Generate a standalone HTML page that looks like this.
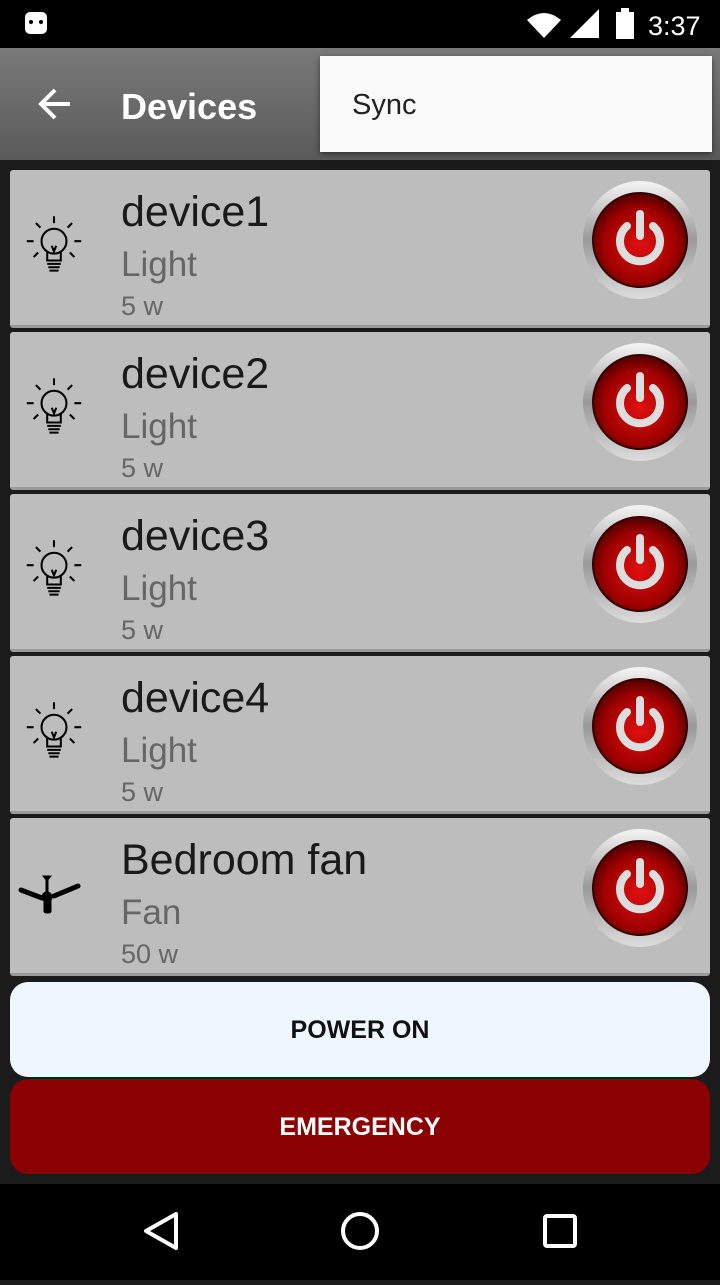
<!DOCTYPE html><html><head><style>
*{margin:0;padding:0;box-sizing:border-box}
body{width:720px;height:1280px;background:#1b1b1b;font-family:"Liberation Sans",sans-serif;position:relative;overflow:hidden}
.sb{position:absolute;top:0;left:0;width:720px;height:48px;background:#000;color:#fff}
.tb{position:absolute;top:48px;left:0;width:720px;height:112px;background:linear-gradient(#7a7a7a,#5a5a5a)}
.menu{position:absolute;left:320px;top:56px;width:392px;height:96px;background:#fafafa;font-size:29px;color:#222;padding:33px 0 0 32px;box-shadow:0 2px 6px rgba(0,0,0,.5)}
.card{position:absolute;left:10px;width:700px;height:158px;background:#bdbdbd;border-radius:3px;border-bottom:3px solid #9a9a9a}
.n{position:absolute;left:111px;top:18px;font-size:43px;color:#1a1a1a}
.t{position:absolute;left:111px;top:75px;font-size:35px;color:#666}
.w{position:absolute;left:111px;top:121px;font-size:27px;color:#666}
.ic{position:absolute;left:10px;top:44px}
.pw{position:absolute;left:572px;top:10px}
.btn{position:absolute;left:10px;width:700px;height:95px;border-radius:18px;text-align:center;line-height:97px;font-size:25px;font-weight:bold}
.nav{position:absolute;top:1184px;left:0;width:720px;height:96px;background:#000}
</style></head><body>
<div class="sb">
<svg width="720" height="48" style="position:absolute;left:0;top:0">
<rect x="25" y="12" width="22" height="22" rx="5" fill="#fff"/><circle cx="31" cy="22" r="2" fill="#000"/><circle cx="41" cy="22" r="2" fill="#000"/>
<path d="M527 20 Q544 6 561 20 L544 38 Z" fill="#fff"/>
<path d="M570 38 L599 38 L599 9 Z" fill="#fff"/>
<rect x="616" y="12" width="18" height="27" fill="#fff"/><rect x="621" y="8" width="8" height="4" fill="#fff"/>
<text x="648" y="35" fill="#fff" font-size="27" font-family="Liberation Sans">3:37</text>
</svg></div>
<div class="tb">
<svg width="40" height="40" style="position:absolute;left:36px;top:36px"><path d="M34 20H6M19 6L5 20L19 34" stroke="#fff" stroke-width="4" fill="none"/></svg>
<div style="position:absolute;left:121px;top:38px;color:#fff;font-size:36px;font-weight:bold">Devices</div>
</div>
<div class="menu">Sync</div>

<div class="card" style="top:170px"><svg class="ic" width="68" height="68" viewBox="0 0 60 60"><g stroke="#000" stroke-width="1.8" fill="none"><circle cx="30" cy="24" r="11"/><path d="M24 33v8h12v-8M24 44h12M25 47h10M26 50h8M28 28l2 5 2-5M30 2v6M14 8l4 4M46 8l-4 4M6 24h6M48 24h6M12 38l4-4M48 38l-4-4"/></g></svg>
<div class="n">device1</div><div class="t">Light</div><div class="w">5 w</div>
<svg class="pw" width="116" height="120" viewBox="0 0 116 120"><defs><radialGradient id="g" cx="50%" cy="55%" r="55%"><stop offset="0" stop-color="#e01010"/><stop offset=".7" stop-color="#a00000"/><stop offset="1" stop-color="#500000"/></radialGradient><linearGradient id="r" x1="0" y1="0" x2="0" y2="1"><stop offset="0" stop-color="#f5f5f5"/><stop offset=".5" stop-color="#999"/><stop offset="1" stop-color="#ddd"/></linearGradient></defs><ellipse cx="58" cy="60" rx="57" ry="59" fill="url(#r)"/><circle cx="58" cy="60" r="47" fill="url(#g)" stroke="#300" stroke-width="2"/><path d="M45 46A20 20 0 1 0 71 46" stroke="#ddd" stroke-width="8" fill="none" stroke-linecap="round"/><path d="M58 34v22" stroke="#ddd" stroke-width="8" stroke-linecap="round"/></svg></div>

<div class="card" style="top:332px"><svg class="ic" width="68" height="68" viewBox="0 0 60 60"><g stroke="#000" stroke-width="1.8" fill="none"><circle cx="30" cy="24" r="11"/><path d="M24 33v8h12v-8M24 44h12M25 47h10M26 50h8M28 28l2 5 2-5M30 2v6M14 8l4 4M46 8l-4 4M6 24h6M48 24h6M12 38l4-4M48 38l-4-4"/></g></svg>
<div class="n">device2</div><div class="t">Light</div><div class="w">5 w</div>
<svg class="pw" width="116" height="120" viewBox="0 0 116 120"><ellipse cx="58" cy="60" rx="57" ry="59" fill="url(#r)"/><circle cx="58" cy="60" r="47" fill="url(#g)" stroke="#300" stroke-width="2"/><path d="M45 46A20 20 0 1 0 71 46" stroke="#ddd" stroke-width="8" fill="none" stroke-linecap="round"/><path d="M58 34v22" stroke="#ddd" stroke-width="8" stroke-linecap="round"/></svg></div>

<div class="card" style="top:494px"><svg class="ic" width="68" height="68" viewBox="0 0 60 60"><g stroke="#000" stroke-width="1.8" fill="none"><circle cx="30" cy="24" r="11"/><path d="M24 33v8h12v-8M24 44h12M25 47h10M26 50h8M28 28l2 5 2-5M30 2v6M14 8l4 4M46 8l-4 4M6 24h6M48 24h6M12 38l4-4M48 38l-4-4"/></g></svg>
<div class="n">device3</div><div class="t">Light</div><div class="w">5 w</div>
<svg class="pw" width="116" height="120" viewBox="0 0 116 120"><ellipse cx="58" cy="60" rx="57" ry="59" fill="url(#r)"/><circle cx="58" cy="60" r="47" fill="url(#g)" stroke="#300" stroke-width="2"/><path d="M45 46A20 20 0 1 0 71 46" stroke="#ddd" stroke-width="8" fill="none" stroke-linecap="round"/><path d="M58 34v22" stroke="#ddd" stroke-width="8" stroke-linecap="round"/></svg></div>

<div class="card" style="top:656px"><svg class="ic" width="68" height="68" viewBox="0 0 60 60"><g stroke="#000" stroke-width="1.8" fill="none"><circle cx="30" cy="24" r="11"/><path d="M24 33v8h12v-8M24 44h12M25 47h10M26 50h8M28 28l2 5 2-5M30 2v6M14 8l4 4M46 8l-4 4M6 24h6M48 24h6M12 38l4-4M48 38l-4-4"/></g></svg>
<div class="n">device4</div><div class="t">Light</div><div class="w">5 w</div>
<svg class="pw" width="116" height="120" viewBox="0 0 116 120"><ellipse cx="58" cy="60" rx="57" ry="59" fill="url(#r)"/><circle cx="58" cy="60" r="47" fill="url(#g)" stroke="#300" stroke-width="2"/><path d="M45 46A20 20 0 1 0 71 46" stroke="#ddd" stroke-width="8" fill="none" stroke-linecap="round"/><path d="M58 34v22" stroke="#ddd" stroke-width="8" stroke-linecap="round"/></svg></div>

<div class="card" style="top:818px"><svg style="position:absolute;left:8px;top:56px" width="64" height="44" viewBox="0 0 64 44"><g stroke="#000" fill="#000"><path d="M25 2h8l-4 5z"/><path d="M29 4v14" stroke-width="3"/><path d="M3 16L24 24" stroke-width="5" stroke-linecap="round"/><path d="M60 12L36 22" stroke-width="5" stroke-linecap="round"/><circle cx="29" cy="23" r="5"/><rect x="26" y="24" width="7" height="15" rx="2"/></g></svg>
<div class="n">Bedroom fan</div><div class="t">Fan</div><div class="w">50 w</div>
<svg class="pw" width="116" height="120" viewBox="0 0 116 120"><ellipse cx="58" cy="60" rx="57" ry="59" fill="url(#r)"/><circle cx="58" cy="60" r="47" fill="url(#g)" stroke="#300" stroke-width="2"/><path d="M45 46A20 20 0 1 0 71 46" stroke="#ddd" stroke-width="8" fill="none" stroke-linecap="round"/><path d="M58 34v22" stroke="#ddd" stroke-width="8" stroke-linecap="round"/></svg></div>

<div class="btn" style="top:982px;background:#eef6ff;color:#111">POWER ON</div>
<div class="btn" style="top:1079px;background:#8b0000;color:#fff">EMERGENCY</div>
<div class="nav"><svg width="720" height="96">
<path d="M176 30L146 47L176 64Z" stroke="#fff" stroke-width="4" fill="none" stroke-linejoin="round"/>
<circle cx="360" cy="47" r="17" stroke="#fff" stroke-width="4" fill="none"/>
<rect x="545" y="32" width="30" height="30" rx="2" stroke="#fff" stroke-width="4" fill="none"/>
</svg></div>
</body></html>
